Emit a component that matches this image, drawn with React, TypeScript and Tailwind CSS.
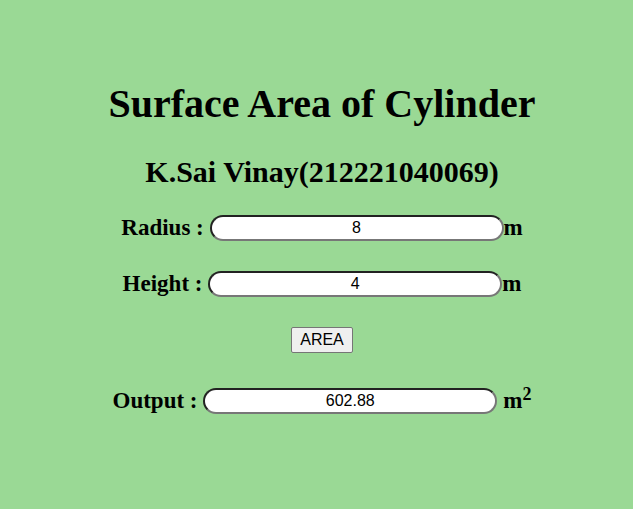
export default function App() {
  const inputCls =
    'w-[294px] h-[26px] rounded-full border-2 border-t-[#222] border-l-[#222] border-b-[#777] border-r-[#777] bg-white text-center text-[16px] text-black outline-none font-["Liberation_Sans",Arial,sans-serif]'
  const labelCls =
    'text-[23px] leading-[26px] font-bold text-black font-["Liberation_Serif","Times_New_Roman",serif]'

  return (
    <div className="min-h-[509px] w-full bg-[#9ad995] flex flex-col items-center pt-[81px] pl-[11px] font-['Liberation_Serif','Times_New_Roman',serif] text-black">
      <h1 className="text-[40px] font-bold leading-[46px]">Surface Area of Cylinder</h1>
      <h2 className="mt-[28px] text-[30px] font-bold leading-[34px]">K.Sai Vinay(212221040069)</h2>

      <div className="mt-[26px] flex items-center">
        <span className={labelCls}>Radius :&nbsp;</span>
        <input className={inputCls} defaultValue="8" />
        <span className={labelCls}>m</span>
      </div>

      <div className="mt-[30px] flex items-center">
        <span className={labelCls}>Height :&nbsp;</span>
        <input className={inputCls} defaultValue="4" />
        <span className={labelCls}>m</span>
      </div>

      <button className="mt-[30px] h-[26px] px-[8px] rounded-[2px] border border-[#767676] bg-[#efefef] text-[16px] leading-[20px] font-['Liberation_Sans',Arial,sans-serif] text-black">
        AREA
      </button>

      <div className="mt-[35px] flex items-center">
        <span className={labelCls}>Output :&nbsp;</span>
        <input className={inputCls} defaultValue="602.88" readOnly />
        <span className={labelCls + ' ml-[6px]'}>
          m<sup className="text-[18px] leading-none relative -top-[8px]">2</sup>
        </span>
      </div>
    </div>
  )
}
